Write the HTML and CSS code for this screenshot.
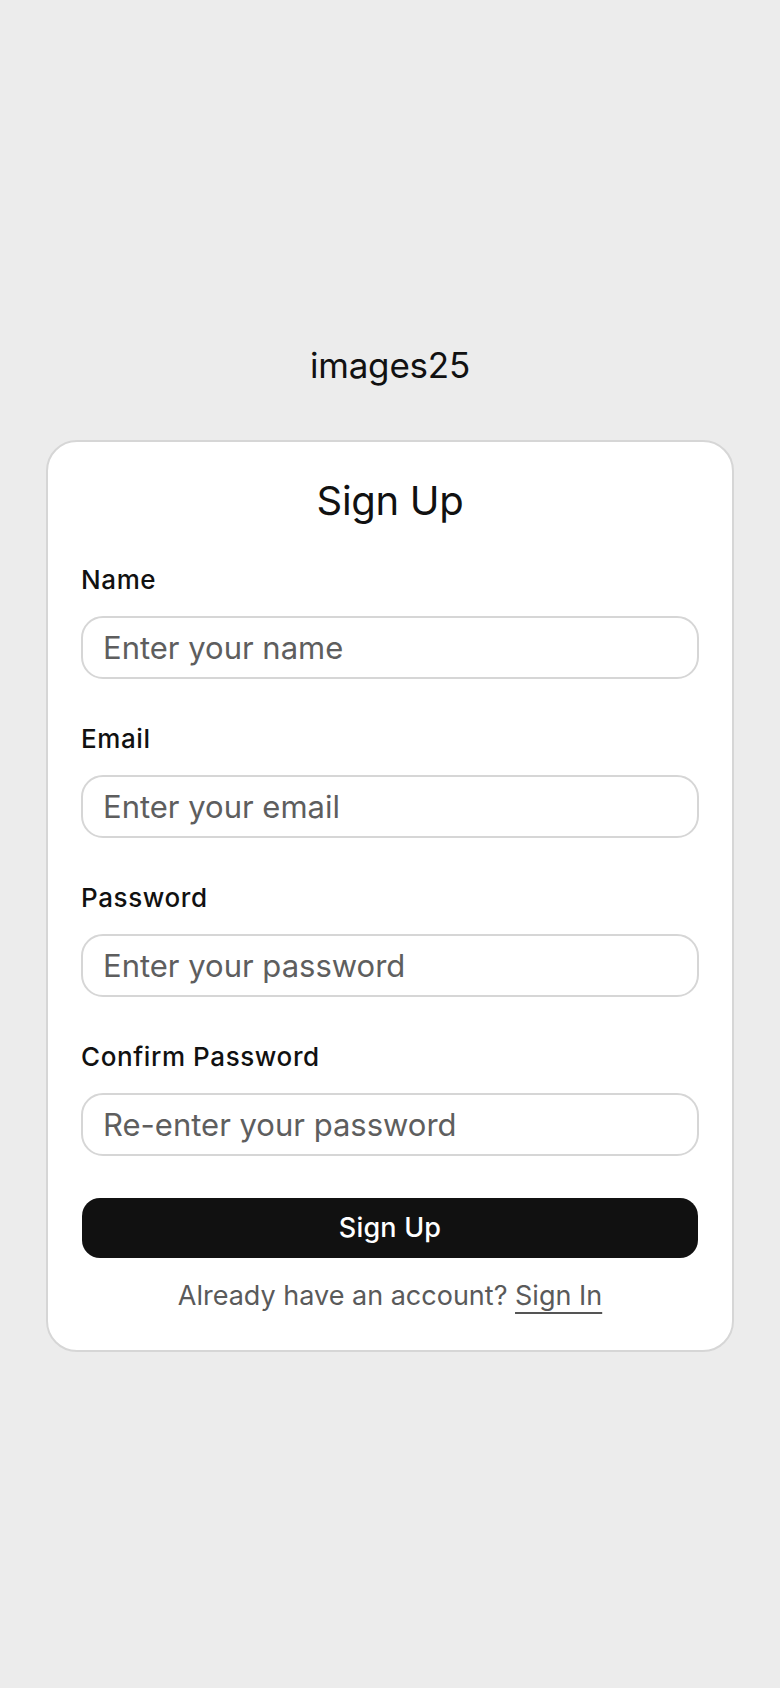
FILE: index.html
```html
<!DOCTYPE html>
<html lang="en">
<head>
<meta charset="utf-8">
<title>Sign Up - images25</title>
<link rel="stylesheet" href="styles.css">
</head>
<body>
<main class="page">
  <div class="brand">images25</div>
  <form class="card">
    <h1 class="title">Sign Up</h1>
    <div class="field">
      <label class="label" for="name">Name</label>
      <input class="input" id="name" type="text" placeholder="Enter your name">
    </div>
    <div class="field">
      <label class="label" for="email">Email</label>
      <input class="input" id="email" type="email" placeholder="Enter your email">
    </div>
    <div class="field">
      <label class="label" for="password">Password</label>
      <input class="input" id="password" type="password" placeholder="Enter your password">
    </div>
    <div class="field">
      <label class="label" for="confirm">Confirm Password</label>
      <input class="input" id="confirm" type="password" placeholder="Re-enter your password">
    </div>
    <button class="submit" type="button">Sign Up</button>
    <p class="footer">Already have an account? <a class="link" href="#">Sign In</a></p>
  </form>
</main>
</body>
</html>
```
FILE: styles.css
```css
* { box-sizing: border-box; }
html, body { margin: 0; padding: 0; }
body {
  background: #ececec;
  font-family: Inter, "Liberation Sans", sans-serif;
  color: #111111;
}
.page {
  min-height: 100vh;
  display: flex;
  flex-direction: column;
  align-items: center;
  justify-content: center;
  padding: 7px 46px 0;
}
.brand {
  font-size: 35px;
  line-height: 42px;
  font-weight: 400;
  color: #111111;
  letter-spacing: -0.2px;
  margin-bottom: 54px;
}
.card {
  width: 100%;
  background: #ffffff;
  border: 2px solid #d6d6d6;
  border-radius: 31px;
  padding: 34px 33px 38px;
  display: flex;
  flex-direction: column;
}
.title {
  margin: 0 0 39px;
  font-size: 40px;
  line-height: 50px;
  font-weight: 400;
  letter-spacing: -0.3px;
  text-align: center;
  color: #111111;
}
.field {
  display: flex;
  flex-direction: column;
  gap: 21px;
  margin-bottom: 45px;
}
.field:nth-of-type(4) { margin-bottom: 42px; }
.label {
  font-size: 26px;
  line-height: 30px;
  font-weight: 500;
  letter-spacing: 0.6px;
  color: #111111;
}
.input {
  height: 63px;
  width: 100%;
  border: 2px solid #d6d6d6;
  border-radius: 22px;
  padding: 0 20px;
  font-family: inherit;
  font-size: 31px;
  color: #111111;
  background: #ffffff;
  outline: none;
}
.input::placeholder { color: #5e5e5e; opacity: 1; }
.submit {
  height: 60px;
  margin: 0 1px;
  border: none;
  border-radius: 18px;
  background: #111111;
  color: #ffffff;
  font-family: inherit;
  font-size: 27px;
  font-weight: 500;
  letter-spacing: 0.2px;
  cursor: pointer;
}
.footer {
  margin: 22px 0 0;
  font-size: 27px;
  line-height: 32px;
  text-align: center;
  color: #5a5a5a;
}
.link {
  color: #5a5a5a;
  text-decoration: underline;
  text-decoration-color: #555555;
  text-decoration-thickness: 2px;
  text-underline-offset: 7px;
}
```
